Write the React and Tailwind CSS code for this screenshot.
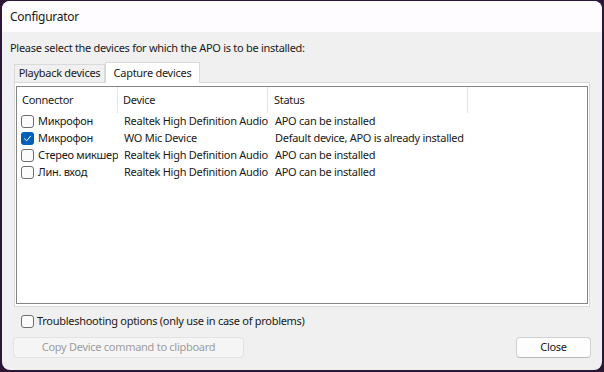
import React from "react";

const rows = [
  { c: "Микрофон", d: "Realtek High Definition Audio", s: "APO can be installed", checked: false },
  { c: "Микрофон", d: "WO Mic Device", s: "Default device, APO is already installed", checked: true },
  { c: "Стерео микшер", d: "Realtek High Definition Audio", s: "APO can be installed", checked: false },
  { c: "Лин. вход", d: "Realtek High Definition Audio", s: "APO can be installed", checked: false },
];

function Box({ checked }) {
  if (checked) {
    return (
      <span className="flex h-[13px] w-[13px] shrink-0 items-center justify-center rounded-[3px] bg-[#005fb8]">
        <svg width="9" height="9" viewBox="0 0 9 9" fill="none">
          <path d="M1.5 4.8 L3.6 6.8 L7.6 2.2" stroke="white" strokeWidth="1" strokeLinecap="round" strokeLinejoin="round" />
        </svg>
      </span>
    );
  }
  return <span className="block h-[13px] w-[13px] shrink-0 rounded-[3px] border border-[#6e6e6e] bg-[#fbfbfb]" />;
}

export default function App() {
  return (
    <div
      className="h-[372px] w-[604px] bg-[#2b1735] pl-[2px] pr-[2px] pt-[1px] pb-[2px] text-[11px] tracking-[-0.28px] text-[#1a1a1a]"
      style={{ fontFamily: '"Noto Sans", "Open Sans", sans-serif' }}
    >
      <div className="flex h-full w-full flex-col overflow-hidden rounded-[8px] bg-[#f0f0f0]">
        <div className="flex h-[31px] shrink-0 items-center bg-[#fefcfe] pl-[8px] text-[12px]">Configurator</div>
        <div className="flex flex-1 flex-col px-[12px] pt-[8px]">
          <div className="h-[16px] leading-[16px]" style={{ marginLeft: -4 }}>
            Please select the devices for which the APO is to be installed:
          </div>
          <div className="mt-[6px] flex h-[20px] items-end">
            <div className="flex h-[18px] w-[91px] items-center justify-center border border-b-0 border-[#dadada] bg-[#f0f0f0]">
              Playback devices
            </div>
            <div className="-mb-px relative z-10 flex h-[21px] w-[95px] items-center justify-center border border-b-0 border-[#dadada] bg-white">
              Capture devices
            </div>
          </div>
          <div className="h-[225px] border border-[#dadada] bg-white px-[1px] pb-[2px] pt-[3px]">
            <div className="h-full border border-[#858585] bg-white">
              <div className="flex h-[26px]">
                <div className="flex w-[101px] items-center border-r border-[#e5e5e5] pl-[5px]">Connector</div>
                <div className="flex w-[150px] items-center border-r border-[#e5e5e5] pl-[5px]">Device</div>
                <div className="flex w-[200px] items-center border-r border-[#e5e5e5] pl-[6px]">Status</div>
              </div>
              {rows.map((r, i) => (
                <div key={i} className="flex h-[17px] items-center">
                  <div className="flex w-[101px] items-center gap-[4px] overflow-hidden pl-[4px] whitespace-nowrap">
                    <Box checked={r.checked} />
                    <span>{r.c}</span>
                  </div>
                  <div className="w-[151px] overflow-hidden pl-[6px] whitespace-nowrap">{r.d}</div>
                  <div className="pl-[6px] whitespace-nowrap">{r.s}</div>
                </div>
              ))}
            </div>
          </div>
          <div className="mt-[8px] flex h-[13px] items-center gap-[3px] pl-[7px]">
            <Box checked={false} />
            <span>Troubleshooting options (only use in case of problems)</span>
          </div>
          <div className="mt-[9px] flex items-center justify-between">
            <div className="-ml-px flex h-[21px] w-[231px] items-center justify-center rounded-[4px] border border-[#e3e3e3] bg-[#f5f5f5] text-[#9d9d9d]">
              Copy Device command to clipboard
            </div>
            <div className="mr-[-1px] flex h-[21px] w-[75px] items-center justify-center rounded-[4px] border border-[#d0d0d0] border-b-[#b8b8b8] bg-[#fdfdfd]">
              Close
            </div>
          </div>
        </div>
      </div>
    </div>
  );
}
